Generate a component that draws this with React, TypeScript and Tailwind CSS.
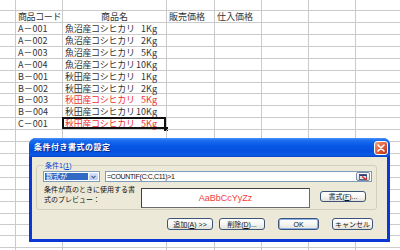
import React from "react";

const colW = [
  "w-[16px]",
  "w-[47px]",
  "w-[104px]",
  "w-[48px]",
  "w-[47px]",
  "w-[47px]",
  "w-[47px]",
  "w-[47px]",
];

const rowH = [
  "h-[11px]",
  "h-[12px]",
  "h-[12px]",
  "h-[12px]",
  "h-[12px]",
  "h-[12px]",
  "h-[12px]",
  "h-[11px]",
  "h-[12px]",
  "h-[12px]",
  "h-[12px]",
  "h-[12px]",
  "h-[12px]",
  "h-[12px]",
  "h-[12px]",
  "h-[12px]",
  "h-[12px]",
  "h-[12px]",
  "h-[11px]",
  "h-[11px]",
  "h-[12px]",
  "h-[12px]",
];

type Item = { code: string; name: string; size: string; red?: boolean; sel?: boolean };

const items: Item[] = [
  { code: "A－001", name: "魚沼産コシヒカリ", size: "1Kg" },
  { code: "A－002", name: "魚沼産コシヒカリ", size: "2Kg" },
  { code: "A－003", name: "魚沼産コシヒカリ", size: "5Kg" },
  { code: "A－004", name: "魚沼産コシヒカリ", size: "10Kg" },
  { code: "B－001", name: "秋田産コシヒカリ", size: "1Kg" },
  { code: "B－002", name: "秋田産コシヒカリ", size: "2Kg" },
  { code: "B－003", name: "秋田産コシヒカリ", size: "5Kg", red: true },
  { code: "B－004", name: "秋田産コシヒカリ", size: "10Kg" },
  { code: "C－001", name: "秋田産コシヒカリ", size: "5Kg", red: true, sel: true },
];

function Cell({ c, children, className = "" }: { c: number; children?: React.ReactNode; className?: string }) {
  return (
    <div
      className={`relative shrink-0 box-border border-r border-b border-[#cbcbcb] flex items-center leading-none whitespace-nowrap ${colW[c]} ${className}`}
    >
      {children}
    </div>
  );
}

function SheetRow({ r }: { r: number }) {
  const cells: React.ReactNode[] = [];
  if (r === 1) {
    cells.push(<Cell key={0} c={0} />);
    cells.push(
      <Cell key={1} c={1} className="pl-[2px]">
        <span className="tracking-[-0.4px]">商品コード</span>
      </Cell>
    );
    cells.push(
      <Cell key={2} c={2} className="justify-center">
        商品名
      </Cell>
    );
    cells.push(
      <Cell key={3} c={3} className="pl-[2px]">
        販売価格
      </Cell>
    );
    cells.push(
      <Cell key={4} c={4} className="pl-[2px]">
        仕入価格
      </Cell>
    );
    for (let c = 5; c < 8; c++) cells.push(<Cell key={c} c={c} />);
  } else if (r >= 2 && r <= 10) {
    const it = items[r - 2];
    cells.push(<Cell key={0} c={0} />);
    cells.push(
      <Cell key={1} c={1} className="pl-[2px]">
        {it.code}
      </Cell>
    );
    cells.push(
      <Cell key={2} c={2} className={`pl-[2px] pr-[9px] ${it.red ? "text-[#f03030]" : ""}`}>
        <span className="shrink-0 tracking-[-0.3px]">{it.name}</span>
        <span className="ml-auto shrink-0">{it.size}</span>
        {it.sel && (
          <>
            <span className="absolute -left-[1px] -top-[1px] right-0 bottom-0 border-2 border-[#111]" />
            <span className="absolute -right-[2px] -bottom-[2px] w-[4px] h-[4px] bg-[#111]" />
          </>
        )}
      </Cell>
    );
    for (let c = 3; c < 8; c++) cells.push(<Cell key={c} c={c} />);
  } else {
    for (let c = 0; c < 8; c++) cells.push(<Cell key={c} c={c} />);
  }
  return <div className={`flex ${rowH[r]}`}>{cells}</div>;
}

function XPButton({
  children,
  className = "",
  def = false,
}: {
  children: React.ReactNode;
  className?: string;
  def?: boolean;
}) {
  return (
    <div
      className={`box-border flex items-center justify-center whitespace-nowrap rounded-[3px] border border-[#3b5478] bg-gradient-to-b from-[#ffffff] via-[#f6f6f3] to-[#e3e2da] text-[7px] leading-none text-[#111] ${
        def ? "shadow-[inset_0_0_0_1px_#8db2ee]" : ""
      } ${className}`}
    >
      {children}
    </div>
  );
}

function Dialog() {
  return (
    <div className="absolute left-[29px] top-[138px] w-[361px] h-[104px] flex flex-col rounded-t-[7px] bg-[#0b37d6] [font-family:'Liberation_Sans','Noto_Sans_CJK_JP',sans-serif]">
      {/* title bar */}
      <div className="h-[19px] shrink-0 rounded-t-[7px] flex items-center pl-[5px] pr-[2px] bg-[linear-gradient(to_bottom,#4a95f8_0%,#1c6ef0_12%,#0758e6_40%,#0550de_70%,#0a5ae6_88%,#0a45c8_100%)]">
        <span className="text-white font-bold text-[8px] leading-none tracking-[0.5px] [text-shadow:1px_1px_0_#0a2a8a]">
          条件付き書式の設定
        </span>
        <div className="ml-auto w-[14px] h-[14px] rounded-[3px] border border-white bg-gradient-to-br from-[#f0a080] via-[#e0603a] to-[#b83010] flex items-center justify-center">
          <svg width="8" height="8" viewBox="0 0 8 8">
            <path d="M1 1 L7 7 M7 1 L1 7" stroke="white" strokeWidth="1.6" strokeLinecap="round" />
          </svg>
        </div>
      </div>
      {/* body */}
      <div className="flex-1 mx-[3px] mb-[3px] bg-[#ece9d8] flex flex-col pt-[4px]">
        <fieldset className="ml-[4px] w-[341px] box-border border border-[#d0d0bf] rounded-[3px] pl-[6px] pr-[4px] pb-[1px]">
          <legend className="ml-[1px] px-[1px] text-[7px] leading-[9px] text-[#0046d5]">
            条件1(<span className="underline">1</span>)
          </legend>
          {/* row 1 */}
          <div className="flex items-center mt-[1px] h-[11px]">
            <div className="w-[57px] h-[11px] box-border border border-[#7f9db9] bg-white flex items-stretch p-[1px]">
              <div className="flex-1 bg-[#316ac5] text-white text-[7px] leading-none flex items-center pl-[1px]">
                数式が
              </div>
              <div className="w-[9px] ml-[1px] bg-gradient-to-b from-[#d9e4fd] to-[#b5c9f7] rounded-[1px] flex items-center justify-center">
                <svg width="5" height="4" viewBox="0 0 5 4">
                  <path d="M0.5 0.8 L2.5 2.8 L4.5 0.8" stroke="#4d6185" strokeWidth="1.2" fill="none" />
                </svg>
              </div>
            </div>
            <div className="ml-[5px] w-[267px] h-[11px] box-border border border-[#7f9db9] bg-white flex items-center pl-[1px] pr-[1px]">
              <span className="text-[7px] leading-none text-[#111] tracking-[-0.35px] [font-family:'Liberation_Sans',sans-serif]">
                =COUNTIF(C:C,C11)&gt;1
              </span>
              <div className="ml-auto w-[14px] h-[9px] box-border rounded-[2px] border border-[#7a8aa6] bg-gradient-to-b from-white to-[#dcdcd4] flex items-center justify-center">
                <svg width="9" height="6" viewBox="0 0 9 6">
                  <rect x="0.5" y="0.5" width="7" height="5" fill="#dfe6f3" stroke="#3a4a6a" strokeWidth="0.8" />
                  <rect x="0.5" y="0.5" width="7" height="1.5" fill="#2a3f7a" />
                  <path d="M3 2.5 L7 5.5" stroke="#e02020" strokeWidth="1.3" />
                  <path d="M5.5 5.8 L8 5.8 L8 3.5 Z" fill="#e02020" />
                </svg>
              </div>
            </div>
          </div>
          {/* row 2 */}
          <div className="flex mt-[3px]">
            <div className="w-[98px] pl-[1px] text-[7px] leading-[10px] text-[#111] whitespace-nowrap">
              条件が真のときに使用する書
              <br />
              式のプレビュー：
            </div>
            <div className="mt-[3px] w-[169px] h-[20px] box-border border border-[#404040] border-b-[#6a6a6a] border-r-[#6a6a6a] bg-white flex items-center justify-center">
              <span className="text-[9px] leading-none text-[#f43b3b] [font-family:'Liberation_Sans',sans-serif]">
                AaBbCcYyZz
              </span>
            </div>
            <XPButton className="mt-[6px] ml-[10px] w-[46px] h-[11px]">
              書式(<span className="underline">F</span>)...
            </XPButton>
          </div>
        </fieldset>
        {/* bottom buttons */}
        <div className="flex justify-end pr-[14px] mt-[8px]">
          <XPButton className="w-[46px] h-[12px]">
            追加(<span className="underline">A</span>) &gt;&gt;
          </XPButton>
          <XPButton className="ml-[6px] w-[46px] h-[12px]">
            削除(<span className="underline">D</span>)...
          </XPButton>
          <XPButton def className="ml-[13px] w-[41px] h-[12px]">
            OK
          </XPButton>
          <XPButton className="ml-[13px] w-[41px] h-[12px]">キャンセル</XPButton>
        </div>
      </div>
    </div>
  );
}

export default function App() {
  return (
    <div className="relative w-[400px] h-[250px] overflow-hidden bg-white text-[9px] text-[#333] [font-family:'Noto_Sans_CJK_JP',sans-serif]">
      {rowH.map((_, r) => (
        <SheetRow key={r} r={r} />
      ))}
      <Dialog />
    </div>
  );
}
